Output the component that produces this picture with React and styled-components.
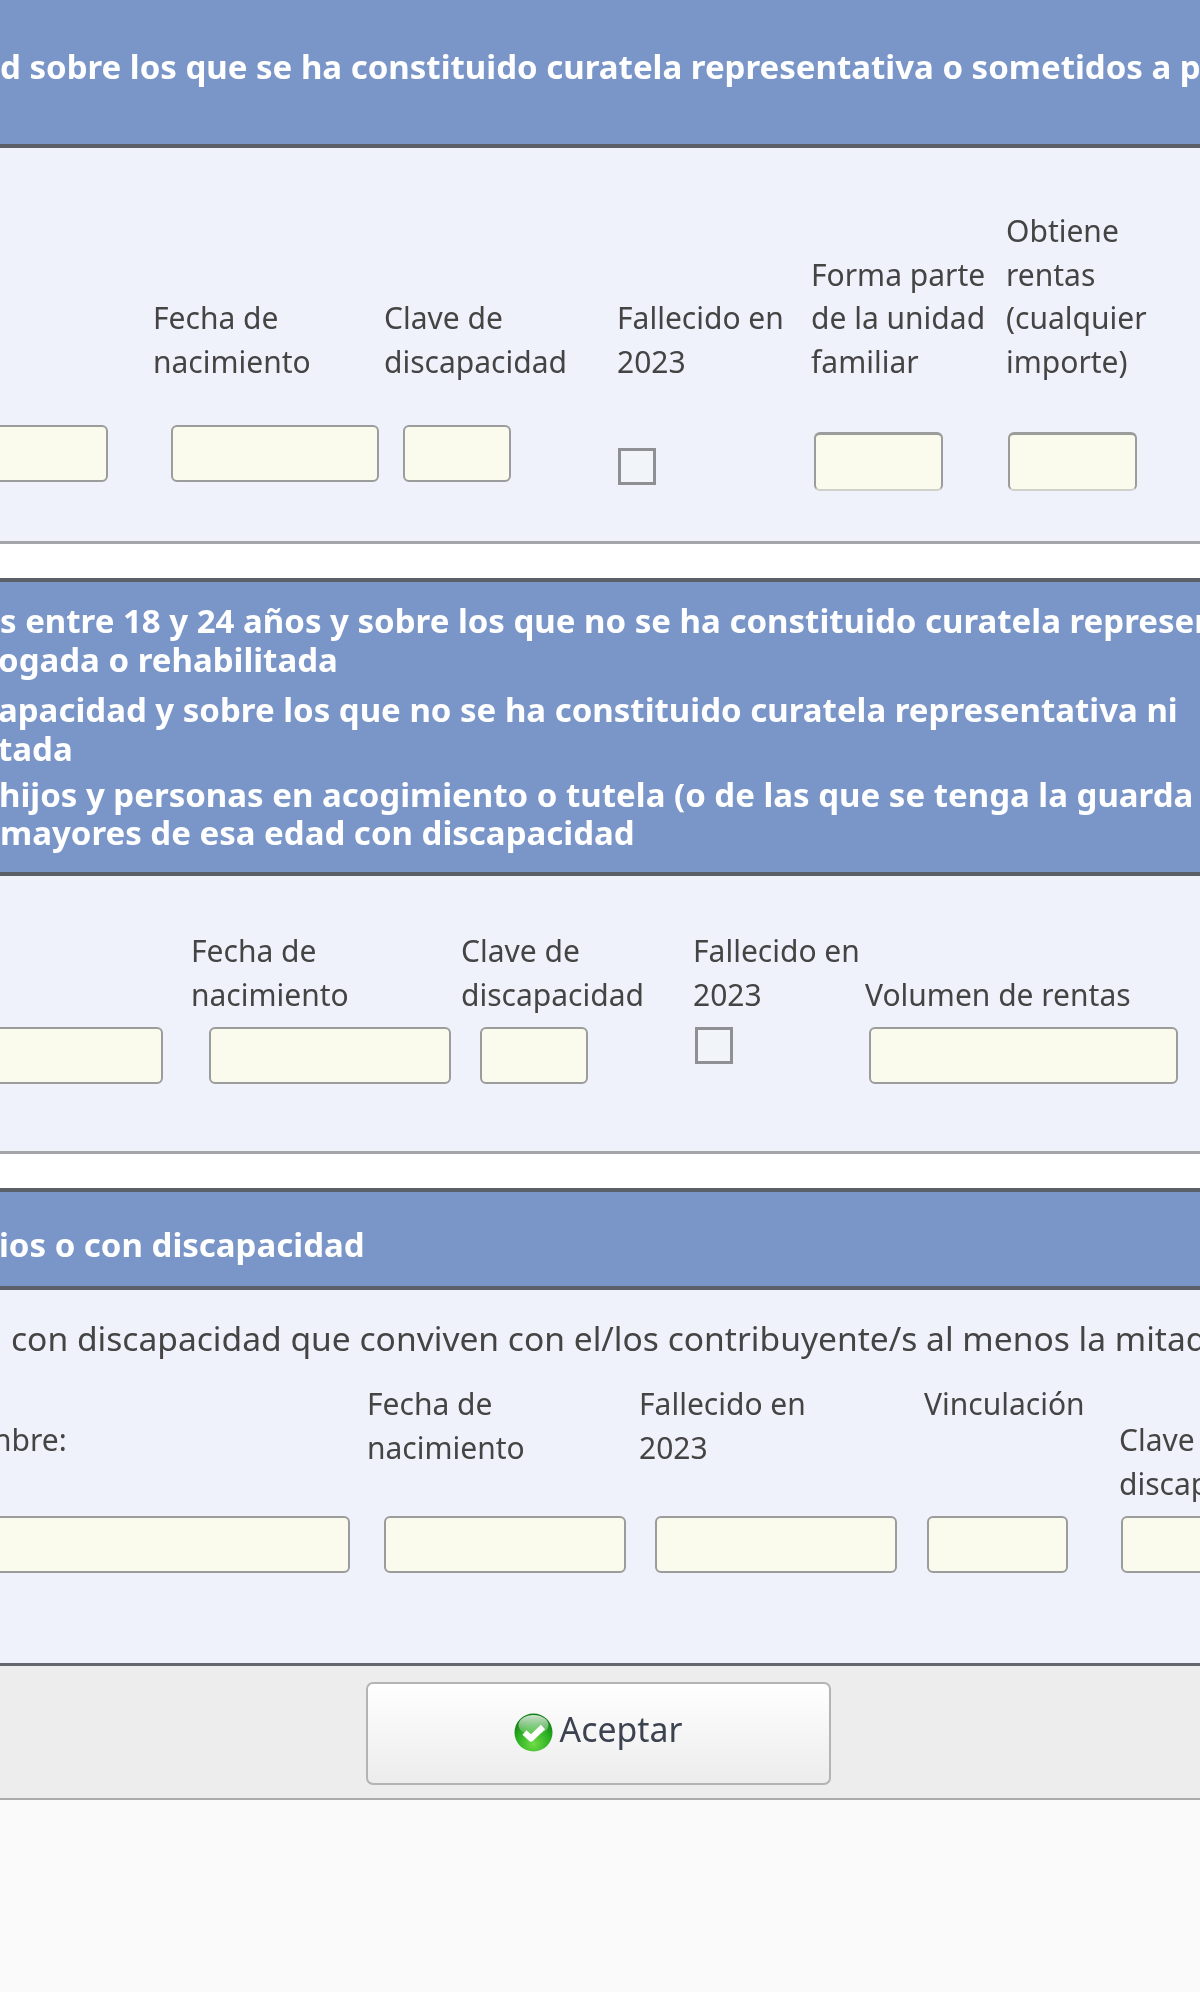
import React from "react";
import styled, { createGlobalStyle } from "styled-components";

const Global = createGlobalStyle`
  html, body { margin: 0; padding: 0; background: #fafafa; }
  body { font-family: "Noto Sans", "Lato", sans-serif; color: #444; }
`;

const Page = styled.div`
  width: 1200px;
  height: 1992px;
  overflow: hidden;
  background: #fafafa;
  filter: blur(0.5px);
`;

const Section = styled.section`
  padding-bottom: ${(p) => p.$after || 0}px;
  background: #fff;
`;

const Header = styled.header`
  background: #7a96c9;
  color: #fff;
  font-weight: 700;
  font-size: 33px;
  line-height: 39px;
  white-space: nowrap;
  border-bottom: 4px solid #5a5f68;
  border-top: ${(p) => (p.$first ? "0" : "4px solid #5a5f68")};
  height: ${(p) => p.$h}px;
  padding-top: ${(p) => p.$pt}px;
  box-sizing: border-box;
`;

const HeadLine = styled.div`
  margin-left: ${(p) => p.$x || 0}px;
  margin-top: ${(p) => p.$gap || 0}px;
`;

const Body = styled.div`
  background: #eff2fa;
  border-bottom: 3px solid ${(p) => p.$line || "#a3a5a9"};
  padding-top: ${(p) => p.$pt}px;
  padding-bottom: ${(p) => p.$pb}px;
`;

const Intro = styled.p`
  margin: 0 0 22px 11px;
  font-size: 33.6px;
  line-height: 44px;
  white-space: nowrap;
`;

const FieldGrid = styled.div`
  display: grid;
  grid-template-columns: ${(p) => p.$cols};
  row-gap: ${(p) => p.$gap}px;
  width: 1200px;
`;

const Label = styled.label`
  display: block;
  font-size: 30px;
  line-height: 43.5px;
  align-self: ${(p) => p.$align || "end"};
  margin-top: ${(p) => p.$top || 0}px;
  margin-left: ${(p) => p.$x || 0}px;
  white-space: pre-line;
`;

const TextField = styled.input.attrs({ type: "text" })`
  display: block;
  box-sizing: border-box;
  width: ${(p) => p.$w}px;
  height: ${(p) => p.$h || 57}px;
  margin-left: ${(p) => p.$x || 0}px;
  margin-top: ${(p) => p.$top || 0}px;
  padding: 0;
  background: #fafbec;
  border: 2px solid #9b9c9c;
  border-bottom-color: ${(p) => (p.$sunken ? "#d0d1cb" : "#9b9c9c")};
  border-top-width: ${(p) => (p.$sunken ? 3 : 2)}px;
  border-radius: 6px;
  outline: none;
`;

const CheckBox = styled.input.attrs({ type: "checkbox" })`
  appearance: none;
  display: block;
  box-sizing: border-box;
  width: 38px;
  height: 37px;
  margin: ${(p) => p.$top || 0}px 0 0 ${(p) => p.$x || 0}px;
  background: #f1f4f8;
  border: 3px solid #8e9094;
`;

const Footer = styled.footer`
  display: flex;
  justify-content: center;
  padding: 16px 4px 0 0;
  height: 116px;
  background: #ededed;
  border-bottom: 2px solid #a9abad;
`;

const AcceptButton = styled.button`
  display: flex;
  align-items: center;
  justify-content: center;
  gap: 7px;
  width: 465px;
  height: 103px;
  box-sizing: border-box;
  padding: 0 0 9px 0;
  background: linear-gradient(#ffffff, #ececec);
  border: 2px solid #b4b4b4;
  border-radius: 7px;
  color: #3d4250;
  font-family: "Noto Sans", "Lato", sans-serif;
  font-size: 33.8px;
`;

const CheckIcon = () => (
  <svg width="39" height="39" viewBox="0 0 39 39" aria-hidden="true" style={{ marginTop: 7 }}>
    <defs>
      <radialGradient id="g" cx="50%" cy="80%" r="70%">
        <stop offset="0%" stopColor="#6fdc45" />
        <stop offset="60%" stopColor="#2eb224" />
        <stop offset="100%" stopColor="#128016" />
      </radialGradient>
      <linearGradient id="s" x1="0" y1="0" x2="0" y2="1">
        <stop offset="0%" stopColor="#fff" stopOpacity="0.8" />
        <stop offset="100%" stopColor="#fff" stopOpacity="0.1" />
      </linearGradient>
    </defs>
    <circle cx="19.5" cy="19.5" r="19" fill="url(#g)" />
    <ellipse cx="19.5" cy="12" rx="15" ry="10" fill="url(#s)" />
    <path d="M10.5 19.5 L17 25.5 L29 14" fill="none" stroke="#fff" strokeWidth="6" strokeLinejoin="round" />
  </svg>
);

export default function App() {
  return (
    <Page>
      <Global />
      <Section $after={34}>
        <Header $first $h={148} $pt={47}>
          <HeadLine $x={0}>d sobre los que se ha constituido curatela representativa o sometidos a patria potestad</HeadLine>
        </Header>
        <Body $pt={61} $pb={50}>
          <FieldGrid $cols="153px 231px 233px 194px 195px 194px" $gap={42}>
            <span />
            <Label>{"Fecha de\nnacimiento"}</Label>
            <Label>{"Clave de\ndiscapacidad"}</Label>
            <Label>{"Fallecido en\n2023"}</Label>
            <Label>{"Forma parte\nde la unidad\nfamiliar"}</Label>
            <Label>{"Obtiene\nrentas\n(cualquier\nimporte)"}</Label>
            <TextField $x={-20} $w={128} />
            <TextField $x={18} $w={208} />
            <TextField $x={19} $w={108} />
            <CheckBox $x={1} $top={23} />
            <TextField $x={3} $w={129} $h={59} $top={7} $sunken />
            <TextField $x={2} $w={129} $h={59} $top={7} $sunken />
          </FieldGrid>
        </Body>
      </Section>

      <Section $after={34}>
        <Header $h={298} $pt={19}>
          <HeadLine>s entre 18 y 24 años y sobre los que no se ha constituido curatela representativa</HeadLine>
          <HeadLine $x={-2}>ogada o rehabilitada</HeadLine>
          <HeadLine $gap={11} $x={-2}>apacidad y sobre los que no se ha constituido curatela representativa ni</HeadLine>
          <HeadLine $x={-2}>tada</HeadLine>
          <HeadLine $gap={7} $x={-1}>hijos y personas en acogimiento o tutela (o de las que se tenga la guarda</HeadLine>
          <HeadLine $gap={-1}>mayores de esa edad con discapacidad</HeadLine>
        </Header>
        <Body $pt={53} $pb={67}>
          <FieldGrid $cols="191px 270px 232px 172px 335px" $gap={11}>
            <span />
            <Label>{"Fecha de\nnacimiento"}</Label>
            <Label>{"Clave de\ndiscapacidad"}</Label>
            <Label>{"Fallecido en\n2023"}</Label>
            <Label>Volumen de rentas</Label>
            <TextField $x={-20} $w={183} />
            <TextField $x={18} $w={242} />
            <TextField $x={19} $w={108} />
            <CheckBox $x={2} />
            <TextField $x={4} $w={309} />
          </FieldGrid>
        </Body>
      </Section>

      <Section>
        <Header $h={102} $pt={33}>
          <HeadLine $x={-1}>ios o con discapacidad</HeadLine>
        </Header>
        <Body $pt={26} $pb={90} $line="#64686e">
          <Intro>con discapacidad que conviven con el/los contribuyente/s al menos la mitad</Intro>
          <FieldGrid $cols="367px 272px 285px 195px 200px" $gap={0}>
            <Label $align="start" $top={36} $x={-7}>nbre:</Label>
            <Label $align="start">{"Fecha de\nnacimiento"}</Label>
            <Label $align="start">{"Fallecido en\n2023"}</Label>
            <Label $align="start">Vinculación</Label>
            <Label $align="start" $top={36}>{"Clave de\ndiscapacidad"}</Label>
            <TextField $x={-20} $w={370} $top={11} />
            <TextField $x={17} $w={242} $top={11} />
            <TextField $x={16} $w={242} $top={11} />
            <TextField $x={3} $w={141} $top={11} />
            <TextField $x={2} $w={200} $top={11} />
          </FieldGrid>
        </Body>
        <Footer>
          <AcceptButton type="button">
            <CheckIcon />
            Aceptar
          </AcceptButton>
        </Footer>
      </Section>
    </Page>
  );
}
